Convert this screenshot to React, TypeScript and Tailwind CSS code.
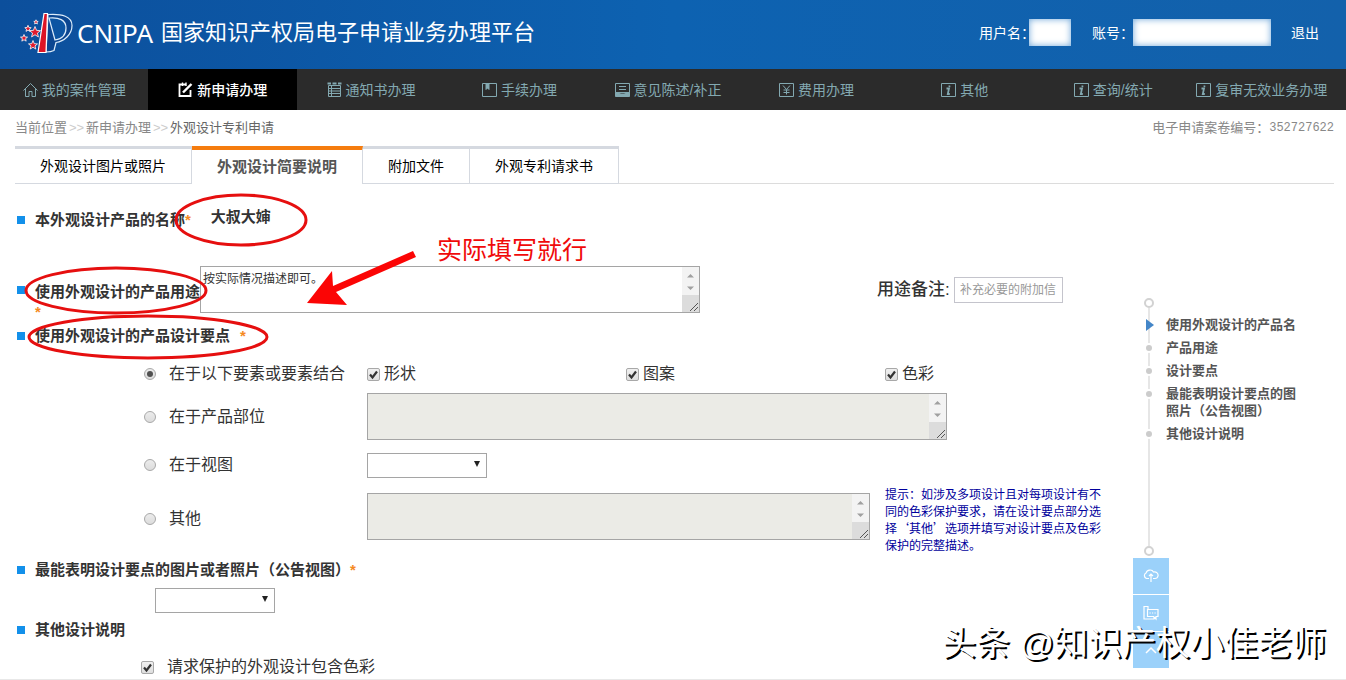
import type { ReactNode } from 'react';
import clsx from 'clsx';

const NAV_ITEMS = [
  { label: '我的案件管理', icon: 'home' },
  { label: '新申请办理', icon: 'edit', active: true },
  { label: '通知书办理', icon: 'list' },
  { label: '手续办理', icon: 'book' },
  { label: '意见陈述/补正', icon: 'note' },
  { label: '费用办理', icon: 'yen' },
  { label: '其他', icon: 'info' },
  { label: '查询/统计', icon: 'info' },
  { label: '复审无效业务办理', icon: 'info' },
];

const TABS = ['外观设计图片或照片', '外观设计简要说明', '附加文件', '外观专利请求书'];
const ACTIVE_TAB = '外观设计简要说明';

const ELEMENTS = ['形状', '图案', '色彩'];

const ICONS: Record<string, ReactNode> = {
  home: <path d="M.5 8.500 7.500 1.500l7 7M2.500 7v7.500h3.500V9.500h3v5h3.500V7" />,
  edit: (
    <>
      <path d="M8 2.500H1.500v11.500h11V8" strokeWidth="1.800" />
      <path d="M5 10.500 13.500 2" strokeWidth="2.400" />
      <path d="M4.500 .5v3.500M8 .5V4" strokeWidth="1.400" />
    </>
  ),
  list: (
    <>
      <path d="M1.500 3.500h12v11h-12zM1.500 6.500h12M1.500 9h12M1.500 11.500h12M4.500 3.500v11" />
      <path d="M.5 1.500H4M5.500 1.500h4M11 1.500h3.500" strokeWidth="2" />
    </>
  ),
  book: (
    <>
      <path d="M.5 1.500h14v13H.5z" />
      <path d="M4 2v5.500L5.500 6 7 7.500V2z" fill="currentColor" />
    </>
  ),
  note: (
    <>
      <path d="M.5 1.500h14v9H.5zM4 4.500h7M4 7.500h7" />
      <path d="M.5 10.500H4L5.500 12h4l1.500-1.500h3.500v4H.5z" fill="currentColor" />
    </>
  ),
  yen: <path d="M.5 1.500h14v13H.5zM4 3.500l3.500 4L11 3.500M7.500 7.500v5M4.500 8h6M4.500 10.500h6" />,
  info: (
    <>
      <path d="M.5 1.500h14v13H.5z" />
      <path d="M5.500 6.500h2.500L6.800 12h2M8.600 3.500l-.3 1.500" strokeWidth="1.800" />
    </>
  ),
};

const NavIcon = ({ name }: { name: string }) => (
  <svg className="h-[15px] w-[15px] shrink-0" viewBox="0 0 15 15" fill="none" stroke="currentColor" aria-hidden="true">
    {ICONS[name]}
  </svg>
);

const STARS = [
  { x: 36, y: 21, r: 2.2 },
  { x: 28, y: 27.500, r: 3.200 },
  { x: 35, y: 31, r: 5.500 },
  { x: 24, y: 37, r: 3.500 },
  { x: 33, y: 44, r: 4.500 },
];

const Logo = () => (
  <svg className="h-[44px] w-[54px] shrink-0" viewBox="20 10 54 44" aria-hidden="true">
    {STARS.map(({ x, y, r }) => (
      <path
        key={y}
        d="M0-1 .28-.3 1-.25.45.2.62.9 0 .5-.62.9-.45.2-1-.25-.28-.3z"
        transform={`translate(${x} ${y}) scale(${r})`}
        fill="#e01b2e"
        stroke="#fff"
        strokeWidth="0.8"
        vectorEffect="non-scaling-stroke"
      />
    ))}
    <path d="M48 13.500c14-1 24 2 24 11 0 9-8 16-16 17l-2 8c-2 1-5 1.500-8 1.500z" fill="#0b4691" stroke="#dcecfa" strokeWidth="1.200" />
    <path d="M49 17c10-1 17 2 17 10 0 7-4 11-11 12z" fill="#0c55a3" stroke="#dcecfa" strokeWidth="1.200" />
    <path d="M44 12.500h3.500L46 51.500h-8z" fill="#dd1526" stroke="#fff" strokeWidth="1.200" />
  </svg>
);

const Header = () => (
  <header className="flex h-[69px] items-center bg-linear-to-r from-[#0c4f9c] via-[#0d62b1] to-[#1361ab] pr-[27px] pb-1 pl-5 text-white">
    <Logo />
    <h1 className="flex items-center gap-2 pl-[3px] text-[22px] leading-7">
      <span className="font-['Noto_Sans','Open_Sans',sans-serif] text-[26px]">CNIPA</span>
      国家知识产权局电子申请业务办理平台
    </h1>
    <div className="ml-auto flex items-center text-sm">
      <span className="w-[50px] whitespace-nowrap">用户名：</span>
      <span className="h-[27px] w-[42px] bg-white shadow-[inset_0_0_7px_#6aa4d8]" />
      <span className="ml-[21px] w-[41px] whitespace-nowrap">账号：</span>
      <span className="h-[27px] w-[138px] bg-white shadow-[inset_0_0_7px_#6aa4d8]" />
      <a href="#" className="ml-5">
        退出
      </a>
    </div>
  </header>
);

const MainNav = () => (
  <nav className="flex h-[41px] bg-[#2b2b2b] pr-2.5 text-sm">
    {NAV_ITEMS.map((item) => (
      <a
        key={item.label}
        href="#"
        className={clsx(
          'flex flex-1 basis-0 items-center justify-center gap-1 whitespace-nowrap',
          item.active ? 'bg-black font-medium text-white' : 'text-[#83a9b1]',
        )}
      >
        <NavIcon name={item.icon} />
        {item.label}
      </a>
    ))}
  </nav>
);

const Required = ({ className }: { className?: string }) => (
  <span className={clsx('text-[#f58a1f]', className)}>*</span>
);

const Bullet = () => <span className="mr-2.5 ml-[17px] h-2 w-2 shrink-0 bg-[#1390ea]" />;

type AreaProps = { label: string; className: string; value?: string; disabled?: boolean };

const TextArea = ({ label, className, value, disabled }: AreaProps) => (
  <div className={clsx('flex h-[47px] shrink-0 border border-[#a5a5a5]', disabled ? 'bg-[#ebebe6]' : 'bg-white', className)}>
    <textarea
      aria-label={label}
      defaultValue={value}
      disabled={disabled}
      className="min-w-0 flex-1 resize-none overflow-hidden px-0.5 py-1 text-xs leading-4 outline-none"
    />
    <svg className="h-[45px] w-[17px]" viewBox="0 0 17 45" aria-hidden="true">
      <path d="M0 0h17v28H0z" fill="#f3f3f3" />
      <path d="M0 28h17v17H0z" fill="#dcdcdc" />
      <path d="M5 10.500 8.500 7l3.500 3.500zM5 19.500 8.500 23l3.500-3.500z" fill="#a0a0a0" />
      <path d="m8 44 8-8M12 44l4-4" stroke="#555" />
    </svg>
  </div>
);

const Select = ({ label }: { label: string }) => (
  <div className="relative h-[25px] w-[120px] shrink-0">
    <select aria-label={label} className="h-full w-full appearance-none border border-[#a5a5a5] bg-white text-xs" />
    <svg className="pointer-events-none absolute top-[9px] right-[7px] h-1.5 w-1.5" viewBox="0 0 7 7" aria-hidden="true">
      <path d="M0 0h7L3.500 7z" fill="#222" />
    </svg>
  </div>
);

const CheckBox = ({ label, className }: { label: string; className: string }) => (
  <label className={clsx('flex items-center', className)}>
    <span className="relative h-[13px] w-[13px]">
      <input
        type="checkbox"
        defaultChecked
        className="peer block h-[13px] w-[13px] appearance-none rounded-xs border border-[#a8a8a8] bg-linear-to-b from-[#f0f0f0] to-[#dedede]"
      />
      <svg
        className="pointer-events-none absolute inset-0 hidden h-[13px] w-[13px] peer-checked:block"
        viewBox="0 0 13 13"
        aria-hidden="true"
      >
        <path d="m3 6.500 2.500 3L10 3.500" fill="none" stroke="#333" strokeWidth="2.200" />
      </svg>
    </span>
    {label}
  </label>
);

const Radio = ({ label, checked }: { label: string; checked?: boolean }) => (
  <label className="flex w-[223px] shrink-0 items-center gap-[13px]">
    <input
      type="radio"
      name="designPoint"
      defaultChecked={checked}
      className="grid h-3 w-3 shrink-0 appearance-none place-content-center rounded-full border border-[#a8a8a8] bg-linear-to-b from-[#ececec] to-[#dcdcdc] before:h-1.5 before:w-1.5 before:rounded-full checked:before:bg-[#505050]"
    />
    {label}
  </label>
);

const BriefForm = () => (
  <form className="min-w-0 flex-1 text-base leading-6 text-[#333]">
    <div className="flex h-[82px] items-start pt-6 text-[15px] font-bold">
      <div className="flex items-center leading-6">
        <Bullet />
        本外观设计产品的名称
        <Required />
      </div>
      <span className="ml-5 leading-[18px]">大叔大婶</span>
    </div>

    <div className="flex h-[47px] items-center">
      <Bullet />
      <div className="w-[165px] shrink-0 self-start pt-4 text-[15px] leading-5 font-bold">
        使用外观设计的产品用途
        <Required className="block" />
      </div>
      <TextArea label="使用外观设计的产品用途" value="按实际情况描述即可。" className="w-[500px]" />
      <label htmlFor="remark" className="ml-[177px] w-[77px] shrink-0 text-[17px] font-medium whitespace-nowrap">
        用途备注:
      </label>
      <input
        id="remark"
        placeholder="补充必要的附加信"
        className="h-[26px] w-[109px] border border-[#c4c4cc] px-[5px] text-xs placeholder:text-[#999]"
      />
    </div>

    <div className="flex h-[46px] items-center text-[15px] font-bold">
      <Bullet />
      使用外观设计的产品设计要点
      <Required className="ml-2.5" />
    </div>

    <div className="pl-36">
      <div className="flex h-[30px] items-center">
        <Radio label="在于以下要素或要素结合" checked />
        {ELEMENTS.map((name) => (
          <CheckBox key={name} label={name} className="w-[259px] shrink-0 gap-1 last:w-auto" />
        ))}
      </div>
      <div className="mt-1 flex items-center">
        <Radio label="在于产品部位" />
        <TextArea label="产品部位" disabled className="w-[580px]" />
      </div>
      <div className="mt-3 flex items-center">
        <Radio label="在于视图" />
        <Select label="视图" />
      </div>
      <div className="mt-2 flex h-[68px] items-center">
        <Radio label="其他" />
        <TextArea label="其他设计要点" disabled className="mt-2 w-[503px] self-start" />
        <p className="ml-[15px] w-[217px] shrink-0 font-['Noto_Sans_CJK_SC',sans-serif] text-xs leading-[17px] text-[#00009c]">
          提示：如涉及多项设计且对每项设计有不
          <br />
          同的色彩保护要求，请在设计要点部分选
          <br />
          择‘其他’选项并填写对设计要点及色彩
          <br />
          保护的完整描述。
        </p>
      </div>
    </div>

    <div className="flex h-[34px] items-center text-[15px] font-bold">
      <Bullet />
      最能表明设计要点的图片或者照片（公告视图）
      <Required />
    </div>
    <div className="pl-[155px]">
      <Select label="公告视图" />
    </div>

    <div className="flex h-[35px] items-center text-[15px] font-bold">
      <Bullet />
      其他设计说明
    </div>
    <CheckBox label="请求保护的外观设计包含色彩" className="mt-2 gap-[13px] pl-[141px]" />
  </form>
);

const Dot = () => <span className="absolute top-1.5 -left-5 h-1.5 w-1.5 rounded-full bg-[#ccc] ring-2 ring-white" />;

const SideRail = () => (
  <aside className="w-[213px] shrink-0 pt-[114px]">
    <span className="ml-[11px] block h-2.5 w-2.5 rounded-full border-2 border-[#d2d2d2]" />
    <ul className="ml-[15px] flex h-[238px] flex-col gap-1.5 border-l-2 border-[#e6e6e6] pt-2 pl-4 text-[13px] leading-[17px] font-bold text-[#555]">
      <li className="relative">
        <svg className="absolute top-[3px] -left-5 h-3 w-2" viewBox="0 0 8 12" aria-hidden="true">
          <path d="M0 0 8 6 0 12z" fill="#4486c8" />
        </svg>
        <a href="#">使用外观设计的产品名</a>
      </li>
      <li className="relative">
        <Dot />
        <a href="#">产品用途</a>
      </li>
      <li className="relative">
        <Dot />
        <a href="#">设计要点</a>
      </li>
      <li className="relative">
        <Dot />
        <a href="#">
          最能表明设计要点的图
          <br />
          照片（公告视图）
        </a>
      </li>
      <li className="relative">
        <Dot />
        <a href="#">其他设计说明</a>
      </li>
    </ul>
    <span className="ml-[11px] block h-2.5 w-2.5 rounded-full border-2 border-[#d2d2d2]" />
    <div className="mt-0.5 flex w-9 flex-col gap-px">
      <button type="button" aria-label="上传" className="grid h-9 place-items-center bg-[#9bd1fa]">
        <svg className="h-4 w-4" viewBox="0 0 16 16" fill="none" stroke="#fff" strokeWidth="1.200" aria-hidden="true">
          <path d="M6 10.500H3.500a3 3 0 0 1-.5-5.500c1-3.500 6-4 7.500-1 3-.5 5 1.500 4.500 4-.3 1.500-1.500 2.500-3 2.500h-2M8 6v8M6 8l2-2 2 2" />
        </svg>
      </button>
      <button type="button" aria-label="留言" className="grid h-9 place-items-center bg-[#9bd1fa]">
        <svg className="h-4 w-4" viewBox="0 0 16 16" fill="none" stroke="#fff" strokeWidth="1.200" aria-hidden="true">
          <path d="M5 4.500V1.500H1v12.500h10v-2M4.500 4.500h10.500v7H13v2.500l-2.500-2.500h-6zM6.500 8h1.200M9 8h1.200M11.500 8h1.200" />
        </svg>
      </button>
      <button type="button" aria-label="返回顶部" className="grid h-9 place-items-center bg-[#9bd1fa]">
        <svg className="h-3 w-3" viewBox="0 0 12 12" fill="none" stroke="#fff" strokeWidth="1.500" aria-hidden="true">
          <path d="m1 9 5-5 5 5" />
        </svg>
      </button>
    </div>
  </aside>
);

// Red pen marks drawn over the form
const Annotations = () => (
  <>
    <svg className="pointer-events-none absolute top-0 left-0 h-[190px] w-[430px]" viewBox="0 184 430 190" aria-hidden="true">
      <g fill="none" stroke="#e60f0f" strokeWidth="3">
        <ellipse cx="241" cy="220" rx="65" ry="25" />
        <ellipse cx="116" cy="290.5" rx="90" ry="22.5" />
        <ellipse cx="148" cy="337" rx="119" ry="21" />
      </g>
      <path d="m307 303 25-32 1 15 80-35 3 6-80 35 11 13z" fill="#fb0505" />
    </svg>
    <p className="absolute top-[50px] left-[437px] text-[25px] leading-8 text-[#f00a0a]">实际填写就行</p>
  </>
);

export default function App() {
  return (
    <div className="relative border-b border-[#e8e8e8] bg-white font-['Liberation_Sans','Noto_Sans_CJK_SC',sans-serif]">
      <Header />
      <MainNav />

      <div className="flex h-9 items-center justify-between pr-3 pl-[15px] text-[13px] text-[#888]">
        <div className="flex items-center">
          <span>当前位置</span>
          <span className="w-[19px] text-center text-[#ccc]">&gt;&gt;</span>
          <a href="#">新申请办理</a>
          <span className="w-[19px] text-center text-[#ccc]">&gt;&gt;</span>
          <a href="#" className="text-[#666]">
            外观设计专利申请
          </a>
        </div>
        <div className="flex items-center">
          电子申请案卷编号：
          <span className="font-['Liberation_Mono',monospace] text-xs">352727622</span>
        </div>
      </div>

      <div className="mr-3 ml-[15px] flex h-[38px] border-b border-[#dcdcdc] text-sm text-black">
        {TABS.map((tab) => (
          <button
            key={tab}
            type="button"
            className={clsx(
              'h-[38px] px-[25px]',
              tab === ACTIVE_TAB
                ? 'border-t-4 border-r border-t-[#f57c0e] border-r-[#d5d9e0] bg-white text-[15px] font-bold text-[#555]'
                : 'border-t-3 border-r border-b border-[#d5d9e0]',
            )}
          >
            {tab}
          </button>
        ))}
      </div>

      <main className="relative flex">
        <BriefForm />
        <SideRail />
        <Annotations />
      </main>

      <p className="pointer-events-none absolute right-5 bottom-4 text-[34px] leading-10 text-white [text-shadow:2px_2px_0_#000]">
        头条 @知识产权小佳老师
      </p>
    </div>
  );
}
